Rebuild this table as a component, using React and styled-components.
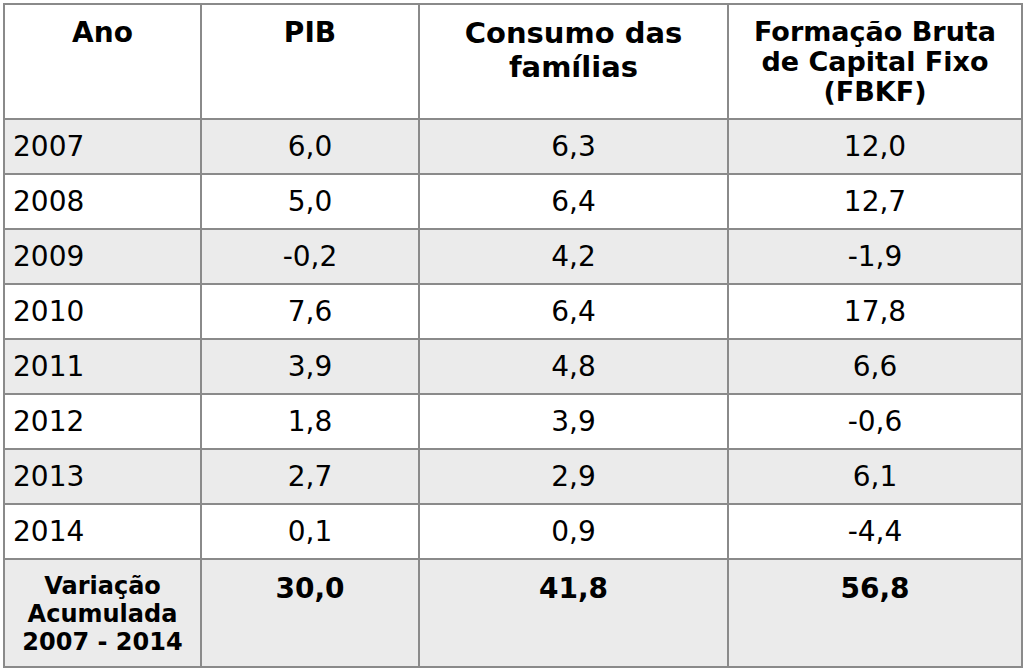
import React from "react";
import styled, { createGlobalStyle } from "styled-components";

const GlobalStyle = createGlobalStyle`
  html, body {
    margin: 0;
    padding: 0;
    background: #ffffff;
  }
  body {
    font-family: "DejaVu Sans", "Liberation Sans", sans-serif;
    color: #000;
  }
`;

const rows = [
  { ano: "2007", pib: "6,0", consumo: "6,3", fbkf: "12,0" },
  { ano: "2008", pib: "5,0", consumo: "6,4", fbkf: "12,7" },
  { ano: "2009", pib: "-0,2", consumo: "4,2", fbkf: "-1,9" },
  { ano: "2010", pib: "7,6", consumo: "6,4", fbkf: "17,8" },
  { ano: "2011", pib: "3,9", consumo: "4,8", fbkf: "6,6" },
  { ano: "2012", pib: "1,8", consumo: "3,9", fbkf: "-0,6" },
  { ano: "2013", pib: "2,7", consumo: "2,9", fbkf: "6,1" },
  { ano: "2014", pib: "0,1", consumo: "0,9", fbkf: "-4,4" },
];

const Page = styled.div`
  padding: 3px 0 0 3px;
`;

const Table = styled.table`
  border-collapse: collapse;
  table-layout: fixed;
  width: 1018px;
  border: 2px solid #8a8a8a;
`;

const HeadCell = styled.th`
  border: 2px solid #8a8a8a;
  height: 115px;
  padding: 12px 6px 0;
  vertical-align: top;
  text-align: center;
  font-weight: bold;
  font-size: ${(p) => p.$size || 28}px;
  line-height: ${(p) => p.$lh || 1.16};
  box-sizing: border-box;
`;

const Row = styled.tr`
  background: ${(p) => (p.$shaded ? "#ebebeb" : "#ffffff")};
`;

const Cell = styled.td`
  border: 2px solid #8a8a8a;
  height: 55px;
  padding: 0 ${(p) => (p.$left ? 8 : 11)}px;
  font-size: 28px;
  text-align: ${(p) => (p.$left ? "left" : "center")};
  vertical-align: middle;
  box-sizing: border-box;
`;

const TotalCell = styled.td`
  border: 2px solid #8a8a8a;
  height: 108px;
  padding: 13px 6px 0;
  vertical-align: top;
  text-align: center;
  font-weight: bold;
  font-size: ${(p) => p.$size || 28}px;
  line-height: 1.16;
  box-sizing: border-box;
`;

export default function App() {
  return (
    <Page>
      <GlobalStyle />
      <Table>
        <colgroup>
          <col style={{ width: 197 }} />
          <col style={{ width: 218 }} />
          <col style={{ width: 309 }} />
          <col style={{ width: 294 }} />
        </colgroup>
        <thead>
          <tr>
            <HeadCell>Ano</HeadCell>
            <HeadCell>PIB</HeadCell>
            <HeadCell $size={29}>
              Consumo das
              <br />
              famílias
            </HeadCell>
            <HeadCell $size={27} $lh={1.12}>
              Formação Bruta
              <br />
              de Capital Fixo
              <br />
              (FBKF)
            </HeadCell>
          </tr>
        </thead>
        <tbody>
          {rows.map((r, i) => (
            <Row key={r.ano} $shaded={i % 2 === 0}>
              <Cell $left>{r.ano}</Cell>
              <Cell>{r.pib}</Cell>
              <Cell>{r.consumo}</Cell>
              <Cell>{r.fbkf}</Cell>
            </Row>
          ))}
          <Row $shaded>
            <TotalCell $size={24}>
              Variação
              <br />
              Acumulada
              <br />
              2007 - 2014
            </TotalCell>
            <TotalCell>30,0</TotalCell>
            <TotalCell>41,8</TotalCell>
            <TotalCell>56,8</TotalCell>
          </Row>
        </tbody>
      </Table>
    </Page>
  );
}
